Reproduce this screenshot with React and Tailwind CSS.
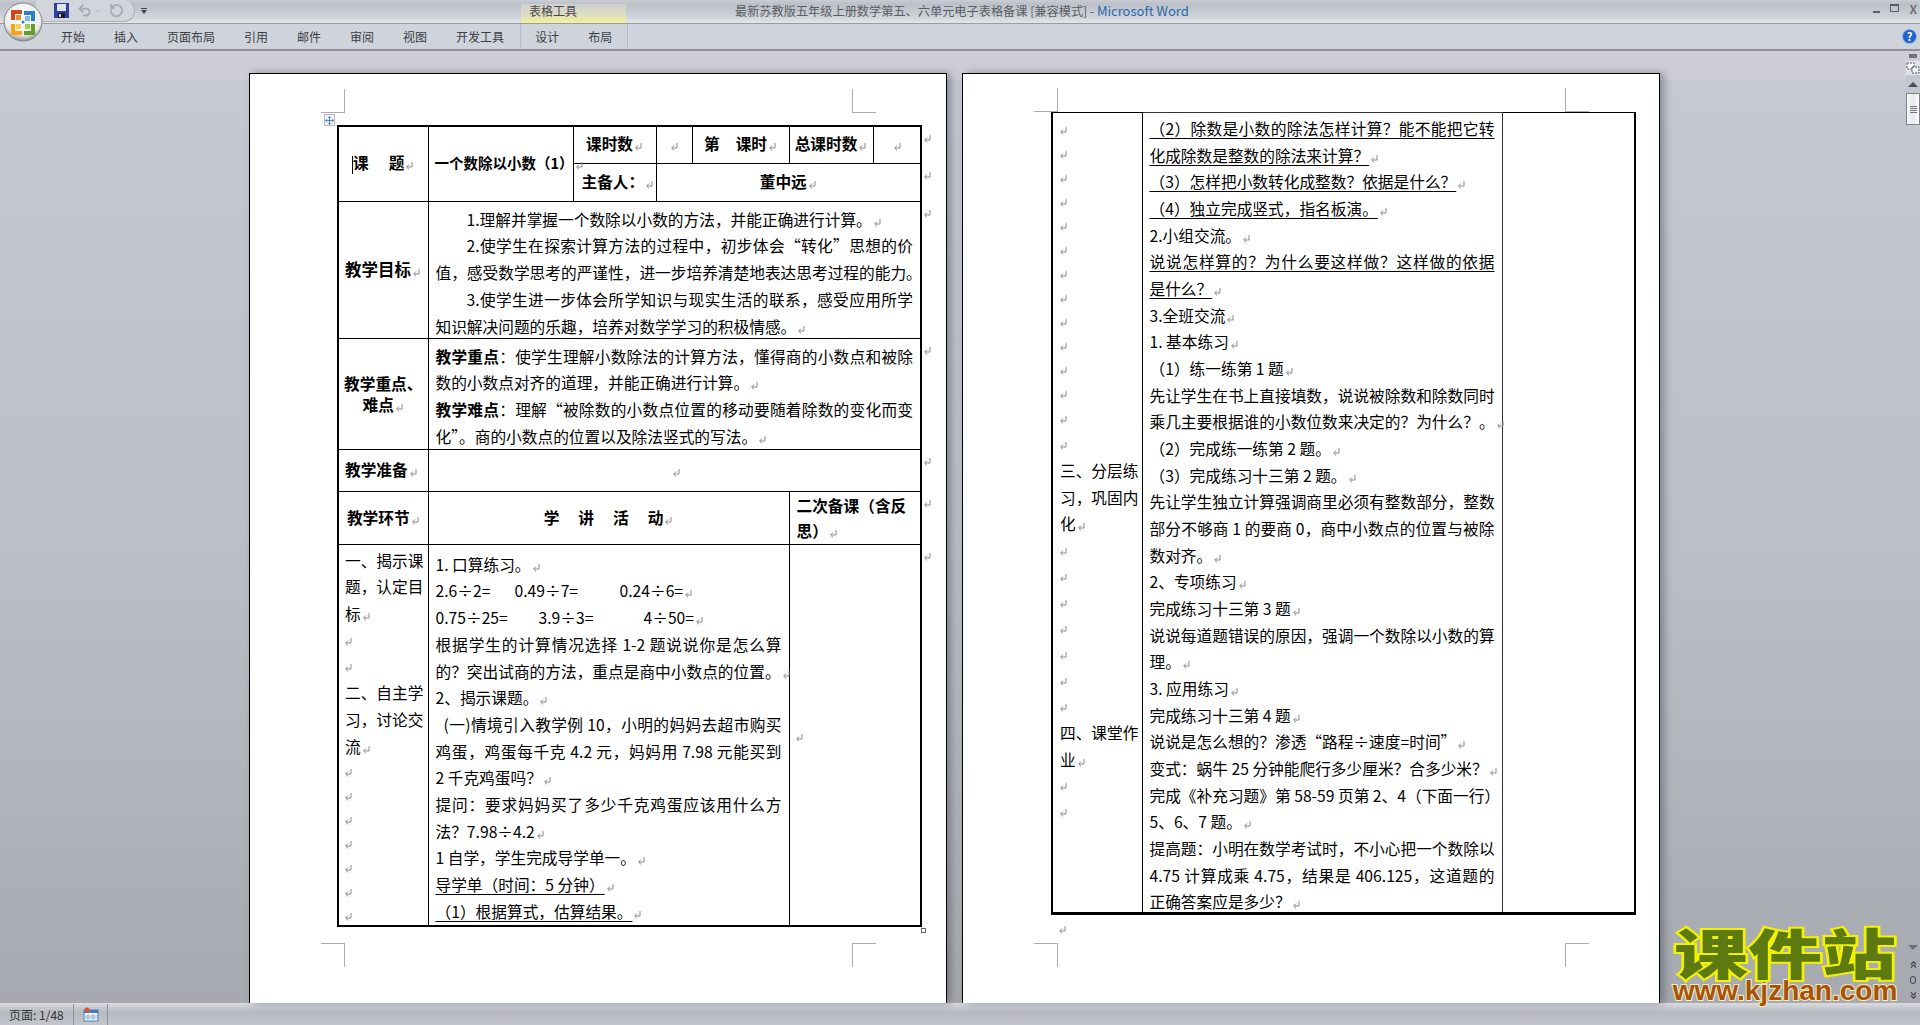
import React from "react";
import { Move, Undo2, RotateCcw, ChevronDown, ChevronsUp, ChevronsDown } from "lucide-react";

const Mark = () => (
  <svg width="9" height="9" viewBox="0 0 9 9" className="inline-block ml-[1px] align-[-1px]">
    <path d="M7 1v5H2M4 3.5 1.6 6 4 8.4" fill="none" stroke="#8a8a8a" strokeWidth="1" />
  </svg>
);

// one rendered line of the document, breaks are the ones in the picture
const Line = ({ text, u, full, indent, bold, pad, cols }) => (
  <div className={full ? "whitespace-nowrap [text-align:justify] [text-align-last:justify]" : "whitespace-nowrap"}>
    {indent && <span className="inline-block w-[31px]" />}
    {pad && <span className="inline-block w-[8px]" />}
    {bold && <b>{bold}</b>}
    {cols && cols.map(([t, w]) => <span key={t} className={w}>{t}</span>)}
    {u ? <span className="underline underline-offset-[3px] decoration-1">{text}</span> : text}
    {!full && <Mark />}
  </div>
);

const tabs = ["开始", "插入", "页面布局", "引用", "邮件", "审阅", "视图", "开发工具"];

const goals = [
  { text: "1.理解并掌握一个数除以小数的方法，并能正确进行计算。", indent: true },
  { text: "2.使学生在探索计算方法的过程中，初步体会“转化”思想的价", indent: true, full: true },
  { text: "值，感受数学思考的严谨性，进一步培养清楚地表达思考过程的能力。", full: true },
  { text: "3.使学生进一步体会所学知识与现实生活的联系，感受应用所学", indent: true, full: true },
  { text: "知识解决问题的乐趣，培养对数学学习的积极情感。" },
];

const keyPoints = [
  { bold: "教学重点", text: "：使学生理解小数除法的计算方法，懂得商的小数点和被除", full: true },
  { text: "数的小数点对齐的道理，并能正确进行计算。" },
  { bold: "教学难点", text: "：理解“被除数的小数点位置的移动要随着除数的变化而变", full: true },
  { text: "化”。商的小数点的位置以及除法竖式的写法。" },
];

const page1Activity = [
  { text: "1. 口算练习。" },
  { cols: [["2.6÷2=", "inline-block w-[79px]"], ["0.49÷7=", "inline-block w-[105px]"], ["0.24÷6=", ""]] },
  { cols: [["0.75÷25=", "inline-block w-[103px]"], ["3.9÷3=", "inline-block w-[105px]"], ["4÷50=", ""]] },
  { text: "根据学生的计算情况选择 1-2 题说说你是怎么算", full: true },
  { text: "的？突出试商的方法，重点是商中小数点的位置。" },
  { text: "2、揭示课题。" },
  { text: "(一)情境引入教学例 10，小明的妈妈去超市购买", full: true, pad: true },
  { text: "鸡蛋，鸡蛋每千克 4.2 元，妈妈用 7.98 元能买到", full: true },
  { text: "2 千克鸡蛋吗？" },
  { text: "提问：要求妈妈买了多少千克鸡蛋应该用什么方", full: true },
  { text: "法？7.98÷4.2" },
  { text: "1 自学，学生完成导学单一。" },
  { text: "导学单（时间：5 分钟）", u: true },
  { text: "（1）根据算式，估算结果。", u: true },
];

const page2Activity = [
  { text: "（2）除数是小数的除法怎样计算？能不能把它转", u: true, full: true },
  { text: "化成除数是整数的除法来计算？", u: true },
  { text: "（3）怎样把小数转化成整数？依据是什么？", u: true },
  { text: "（4）独立完成竖式，指名板演。", u: true },
  { text: "2.小组交流。" },
  { text: "说说怎样算的？为什么要这样做？这样做的依据", u: true, full: true },
  { text: "是什么？", u: true },
  { text: "3.全班交流" },
  { text: "1. 基本练习" },
  { text: "（1）练一练第 1 题" },
  { text: "先让学生在书上直接填数，说说被除数和除数同时", full: true },
  { text: "乘几主要根据谁的小数位数来决定的？为什么？。" },
  { text: "（2）完成练一练第 2 题。" },
  { text: "（3）完成练习十三第 2 题。" },
  { text: "先让学生独立计算强调商里必须有整数部分，整数", full: true },
  { text: "部分不够商 1 的要商 0，商中小数点的位置与被除", full: true },
  { text: "数对齐。" },
  { text: "2、专项练习" },
  { text: "完成练习十三第 3 题" },
  { text: "说说每道题错误的原因，强调一个数除以小数的算", full: true },
  { text: "理。" },
  { text: "3. 应用练习" },
  { text: "完成练习十三第 4 题" },
  { text: "说说是怎么想的？渗透“路程÷速度=时间”" },
  { text: "变式：蜗牛 25 分钟能爬行多少厘米？合多少米？" },
  { text: "完成《补充习题》第 58-59 页第 2、4（下面一行）", full: true },
  { text: "5、6、7 题。" },
  { text: "提高题：小明在数学考试时，不小心把一个数除以", full: true },
  { text: "4.75 计算成乘 4.75，结果是 406.125，这道题的", full: true },
  { text: "正确答案应是多少？" },
];

const MarkRows = ({ count, tall }) =>
  Array.from({ length: count }).map((_, i) => (
    <div key={i} className={tall ? "h-[26px] flex items-center -ml-[2px]" : "h-[24px] flex items-center -ml-[2px]"}>
      <Mark />
    </div>
  ));

const Crop = ({ className }) => <div className={"absolute w-[24px] h-[24px] border-[#adadad] " + className} />;

const OfficeButton = () => (
  <svg width="40" height="40" viewBox="0 0 40 40" className="absolute left-[3px] top-[2px]">
    <defs>
      <radialGradient id="orb" cx="50%" cy="35%" r="65%">
        <stop offset="0" stopColor="#ffffff" />
        <stop offset="0.75" stopColor="#eceded" />
        <stop offset="1" stopColor="#8d8f90" />
      </radialGradient>
    </defs>
    <circle cx="20" cy="20" r="19" fill="url(#orb)" stroke="#7f8183" />
    <path d="M8 8h11v4h-7v6H8z" fill="#d8431a" />
    <path d="M13 13h5v5h-5z" fill="#ee8a2a" />
    <path d="M21 9h11v10h-4v-6h-7z" fill="#2a7fcb" />
    <path d="M22 14h5v5h-5z" fill="#7cbce8" />
    <path d="M8 22h4v7h7v4H8z" fill="#f2a516" />
    <path d="M13 22h5v5h-5z" fill="#f8cf4a" />
    <path d="M32 22v11H21v-4h7v-7z" fill="#5f9f27" />
    <path d="M22 22h5v5h-5z" fill="#9ccb4f" />
    <circle cx="20" cy="20" r="1.5" fill="#2a7fcb" />
  </svg>
);

const SaveIcon = () => (
  <svg width="15" height="15" viewBox="0 0 15 15">
    <rect width="15" height="15" fill="#2e3f9c" />
    <rect x="3" y="1" width="9" height="7" fill="#dfe4f5" />
    <rect x="4" y="10" width="7" height="5" fill="#1c1c28" />
    <rect x="5" y="11" width="2" height="3" fill="#c9cbd6" />
  </svg>
);

const StatusIcon = () => (
  <svg width="16" height="15" viewBox="0 0 16 15">
    <rect x="1" y="3" width="14" height="11" fill="#f4f7fb" stroke="#4f7fb5" />
    <rect x="1" y="3" width="14" height="3" fill="#3e7cc4" />
    <path d="M5 7v6M10 7v6M2 9h13M2 11h13" stroke="#8fb0d6" />
    <circle cx="4" cy="3" r="2.5" fill="#e0542b" />
  </svg>
);

const RulerIcon = () => (
  <svg width="14" height="14" viewBox="0 0 14 14">
    <rect width="14" height="14" fill="#dfe2e9" />
    <path d="M1 2h7v6H1z" fill="#fff" stroke="#55585f" strokeDasharray="2 1" />
    <path d="M6 6h7v6H6z" fill="#eef0f5" stroke="#55585f" strokeDasharray="2 1" />
  </svg>
);

export default function App() {
  return (
    <div className="relative w-screen h-screen overflow-hidden flex flex-col text-black [font-family:'Noto_Sans_CJK_SC','Liberation_Sans',sans-serif]">
      {/* title bar */}
      <div className="h-[24px] shrink-0 flex bg-[linear-gradient(#c9ccd3_0px,#bcc0c8_4px,#c6cad1_12px,#d3d6dd_18px,#e2e5eb_23px)] border-b border-[#9a9ca1]">
        <div className="w-[521px] shrink-0 flex">
          <div className="ml-[36px] w-[99px] h-[22px] rounded-br-[12px] rounded-tr-[12px] bg-[#d2d5dc] border-b border-r border-[#aeb1b8] flex items-center pl-[18px]">
            <SaveIcon />
            <Undo2 size={15} strokeWidth={3} className="ml-[8px] text-[#a8acb3]" />
            <ChevronDown size={8} className="ml-[2px] text-[#a8acb3]" />
            <RotateCcw size={15} strokeWidth={3} className="ml-[7px] text-[#a8acb3]" />
          </div>
          <div className="ml-[5px] mt-[8px] w-[7px] h-[8px] flex flex-col items-center">
            <div className="w-[6px] h-[1px] bg-[#444]" />
            <div className="mt-[1px] w-0 h-0 border-x-[3px] border-x-transparent border-t-[4px] border-t-[#444]" />
          </div>
        </div>
        <div className="w-[105px] shrink-0 mt-[4px] pl-[8px] text-[12px] leading-[14px] text-[#4a4a4a] bg-[linear-gradient(#cfd0cf_0px,#dcdcc4_10px,#f3f29a_19px)]">
          表格工具
        </div>
        <div className="ml-[109px] pt-[3px] text-[12.2px] leading-[16px] text-[#5a5d64] whitespace-nowrap">
          最新苏教版五年级上册数学第五、六单元电子表格备课 [兼容模式] - <span className="text-[13px] text-[#2a68ad]">Microsoft Word</span>
        </div>
        <div className="ml-auto flex items-start gap-[10px] pr-[3px] pt-[4px] text-[#6d7076]">
          <div className="mt-[7px] w-[7px] h-[2px] bg-[#5c5f65]" />
          <div className="w-[9px] h-[8px] border border-t-2 border-[#5c5f65]" />
          <div className="text-[12px] leading-[10px] font-bold">X</div>
        </div>
      </div>

      {/* tab row */}
      <div className="h-[27px] shrink-0 flex items-center pl-[46.5px] text-[12px] text-[#3b3d42] bg-[#cfd3dc] border-b-2 border-[#8f9196]">
        {tabs.map((t) => (
          <div key={t} className="px-[14.5px]">{t}</div>
        ))}
        <div className="ml-[1px] h-full flex items-center border-x border-[#b9bcc4]">
          <div className="px-[14.5px]">设计</div>
          <div className="px-[14.5px]">布局</div>
        </div>
        <div className="ml-auto mr-[3px] w-[15px] h-[15px] rounded-full bg-[#1f62c9] border border-[#8fb4e8] flex items-center justify-center text-white text-[11px] font-bold leading-none">?</div>
      </div>

      {/* document area */}
      <div className="flex-1 min-h-0 flex bg-[linear-gradient(#cfcdd8_0px,#cfcdd8_29px,#c4c9d2_30px,#bbbfc7_480px,#b2b6bd_700px,#a6a9af_952px)]">
        <div className="flex-1 min-w-0 flex items-stretch pl-[249px] pt-[22px] gap-[15px]">
          {/* page 1 */}
          <div className="relative w-[698px] shrink-0 bg-white border-x border-t border-black shadow-[4px_0_8px_rgba(60,60,70,0.45)] pt-[51px] pl-[87px] text-[15.7px] leading-[26.8px]">
            <Crop className="left-[71px] top-[15px] border-r border-b" />
            <Crop className="left-[602px] top-[15px] border-l border-b" />
            <Crop className="left-[71px] top-[869px] border-r border-t" />
            <Crop className="left-[602px] top-[869px] border-l border-t" />
            <div className="absolute left-[74px] top-[40px] w-[11px] h-[12px] bg-[#f3f4f8] border border-[#b5b8c0] flex items-center justify-center text-[#2b62c8]">
              <Move size={9} />
            </div>
            <div className="absolute left-[671px] top-[854px] w-[5px] h-[5px] border border-[#666]" />

            <table className="table-fixed border-collapse w-[601px]">
              <colgroup>
                <col className="w-[90px]" />
                <col className="w-[145px]" />
                <col className="w-[83px]" />
                <col className="w-[36px]" />
                <col className="w-[97px]" />
                <col className="w-[84px]" />
                <col className="w-[48px]" />
                <col className="w-[18px]" />
              </colgroup>
              <tbody>
                <tr className="h-[37px]">
                  <td rowSpan={2} className="border border-black border-l-2 border-t-2 text-center font-bold">
                    <span className="inline-block w-[1px] h-[18px] bg-black align-middle" />
                    课<span className="inline-block w-[20px]" />题<Mark />
                  </td>
                  <td rowSpan={2} className="border border-black border-t-2 pl-[6px] font-bold text-[14.5px] whitespace-nowrap">
                    一个数除以小数（1）<Mark />
                  </td>
                  <td className="border border-black border-t-2 text-center font-bold">课时数<Mark /></td>
                  <td className="border border-black border-t-2 text-center"><Mark /></td>
                  <td className="border border-black border-t-2 text-center font-bold whitespace-nowrap">第<span className="inline-block w-[16px]" />课时<Mark /></td>
                  <td className="border border-black border-t-2 text-center font-bold whitespace-nowrap">总课时数<Mark /></td>
                  <td className="border border-black border-t-2 border-r-2 text-center"><Mark /></td>
                  <td className="border-0 align-top leading-[20px]"><Mark /></td>
                </tr>
                <tr className="h-[38px]">
                  <td className="border border-black pl-[8px] font-bold whitespace-nowrap">主备人：<Mark /></td>
                  <td colSpan={4} className="border border-black border-r-2 text-center font-bold">董中远<Mark /></td>
                  <td className="border-0 align-top leading-[20px]"><Mark /></td>
                </tr>
                <tr className="h-[137px]">
                  <td className="border border-black border-l-2 pl-[6px] font-bold text-[16.5px] whitespace-nowrap">教学目标<Mark /></td>
                  <td colSpan={6} className="border border-black border-r-2 align-top px-[7px] pt-[5px]">
                    <div className="-mb-[3px]">
                      {goals.map((g, i) => <Line key={i} {...g} />)}
                    </div>
                  </td>
                  <td className="border-0 align-top leading-[20px]"><Mark /></td>
                </tr>
                <tr className="h-[111px]">
                  <td className="border border-black border-l-2 text-center font-bold leading-[21px] whitespace-nowrap">
                    教学重点、<br />难点<Mark />
                  </td>
                  <td colSpan={6} className="border border-black border-r-2 align-top px-[7px] pt-[5px]">
                    <div className="-mb-[2px]">
                      {keyPoints.map((g, i) => <Line key={i} {...g} />)}
                    </div>
                  </td>
                  <td className="border-0 align-top leading-[20px]"><Mark /></td>
                </tr>
                <tr className="h-[42px]">
                  <td className="border border-black border-l-2 pl-[6px] font-bold whitespace-nowrap">教学准备<Mark /></td>
                  <td colSpan={6} className="border border-black border-r-2 text-center pl-[4px]"><Mark /></td>
                  <td className="border-0 align-top leading-[20px]"><Mark /></td>
                </tr>
                <tr className="h-[53px]">
                  <td className="border border-black border-l-2 text-center font-bold whitespace-nowrap pt-[2px]">教学环节<Mark /></td>
                  <td colSpan={4} className="border border-black text-center font-bold pt-[2px]">
                    学<span className="inline-block w-[19px]" />讲<span className="inline-block w-[19px]" />活<span className="inline-block w-[19px]" />动<Mark />
                  </td>
                  <td colSpan={2} className="border border-black border-r-2 px-[7px] font-bold leading-[25px]">
                    <div className="whitespace-nowrap">二次备课（含反</div>
                    <div>思）<Mark /></div>
                  </td>
                  <td className="border-0 align-top leading-[20px]"><Mark /></td>
                </tr>
                <tr className="h-[382px]">
                  <td className="border border-black border-l-2 border-b-2 align-top pl-[6px] pt-[3px] whitespace-nowrap">
                    <div className="-mb-[4px]">
                      <div>一、揭示课</div>
                      <div>题，认定目</div>
                      <div>标<Mark /></div>
                      <MarkRows count={2} tall />
                      <div>二、自主学</div>
                      <div>习，讨论交</div>
                      <div>流<Mark /></div>
                      <MarkRows count={7} />
                    </div>
                  </td>
                  <td colSpan={4} className="border border-black border-b-2 align-top px-[7px] pt-[7px] leading-[26.7px]">
                    <div className="-mb-[4px]">
                      {page1Activity.map((g, i) => <Line key={i} {...g} />)}
                    </div>
                  </td>
                  <td colSpan={2} className="border border-black border-r-2 border-b-2 pl-[4px]"><Mark /></td>
                  <td className="border-0 align-top leading-[20px]"><Mark /></td>
                </tr>
              </tbody>
            </table>
          </div>

          {/* page 2 */}
          <div className="relative w-[698px] shrink-0 bg-white border-x border-t border-black shadow-[4px_0_8px_rgba(60,60,70,0.45)] pt-[38px] pl-[88px] text-[15.7px] leading-[26.67px]">
            <Crop className="left-[71px] top-[14px] border-r border-b" />
            <Crop className="left-[602px] top-[14px] border-l border-b" />
            <Crop className="left-[71px] top-[869px] border-r border-t" />
            <Crop className="left-[602px] top-[869px] border-l border-t" />

            <table className="table-fixed border-collapse w-[583px]">
              <colgroup>
                <col className="w-[90px]" />
                <col className="w-[360px]" />
                <col className="w-[133px]" />
              </colgroup>
              <tbody>
                <tr className="h-[801px]">
                  <td className="border border-black border-l-2 border-b-[3px] align-top pl-[7px] pt-[5px] whitespace-nowrap">
                    <MarkRows count={12} />
                    <MarkRows count={2} tall />
                    <div>三、分层练</div>
                    <div>习，巩固内</div>
                    <div>化<Mark /></div>
                    <MarkRows count={7} tall />
                    <div>四、课堂作</div>
                    <div>业<Mark /></div>
                    <MarkRows count={2} tall />
                  </td>
                  <td className="border border-[#333] border-b-[3px] border-b-black align-top px-[7px] pt-[3px]">
                    <div className="-mb-[4px]">
                      {page2Activity.map((g, i) => <Line key={i} {...g} />)}
                    </div>
                  </td>
                  <td className="border border-black border-r-2 border-b-[3px]" />
                </tr>
              </tbody>
            </table>
            <div className="pl-[6px] leading-[24px]"><Mark /></div>
          </div>
        </div>

        {/* scrollbar */}
        <div className="w-[14px] shrink-0 flex flex-col items-stretch">
          <div className="mt-[3px] ml-[3px] w-[8px] h-[4px] bg-[#6f7278]" />
          <div className="mt-[3px] h-[14px]"><RulerIcon /></div>
          <div className="h-[18px] bg-[#c3c7cf] flex items-center justify-center">
            <div className="w-0 h-0 border-x-[5px] border-x-transparent border-b-[5px] border-b-[#4a4e58]" />
          </div>
          <div className="h-[32px] bg-[linear-gradient(90deg,#f8f9fb,#e8e9ee,#ffffff)] border border-[#7e8289] flex flex-col items-center justify-center gap-[1px]">
            <div className="w-[7px] h-[1px] bg-[#777]" />
            <div className="w-[7px] h-[1px] bg-[#777]" />
            <div className="w-[7px] h-[1px] bg-[#777]" />
            <div className="w-[7px] h-[1px] bg-[#777]" />
          </div>
          <div className="flex-1" />
          <div className="h-[17px] flex items-center justify-center">
            <div className="w-0 h-0 border-x-[5px] border-x-transparent border-t-[5px] border-t-[#6a6e77]" />
          </div>
          <div className="h-[16px] flex items-center justify-center text-[#3f4248]"><ChevronsUp size={11} strokeWidth={2.5} /></div>
          <div className="h-[15px] flex items-center justify-center">
            <div className="w-[6px] h-[8px] rounded-full border border-[#3f4248]" />
          </div>
          <div className="h-[16px] flex items-center justify-center text-[#3f4248]"><ChevronsDown size={11} strokeWidth={2.5} /></div>
        </div>
      </div>

      {/* status bar */}
      <div className="h-[22px] shrink-0 flex items-center text-[12px] text-[#333] bg-[linear-gradient(#d5d7dc,#b6b9bf_40%,#c3c6cc)] border-t border-[#d9dbe0]">
        <div className="w-[74px] h-full pl-[9px] flex items-center border-r border-[#8f9298] whitespace-nowrap">页面: 1/48</div>
        <div className="w-[34px] h-full flex items-center justify-center border-r border-[#8f9298]">
          <StatusIcon />
        </div>
      </div>

      <OfficeButton />

      {/* site watermark */}
      <div className="absolute left-[1670px] top-[923px] w-[230px] flex flex-col items-center">
        <div className="h-[58px] flex items-center justify-center whitespace-nowrap scale-x-[1.37] text-[54px] leading-[58px] font-black text-[#5c7a10] [-webkit-text-stroke:4px_#f2f200] [paint-order:stroke]">
          课件站
        </div>
        <div className="-mt-[2px] h-[24px] flex items-center whitespace-nowrap text-[28px] leading-[24px] font-bold text-[#a8500f] [-webkit-text-stroke:2px_#f4f0b0] [paint-order:stroke] [font-family:'Liberation_Sans',sans-serif]">
          www.kjzhan.com
        </div>
      </div>
    </div>
  );
}
